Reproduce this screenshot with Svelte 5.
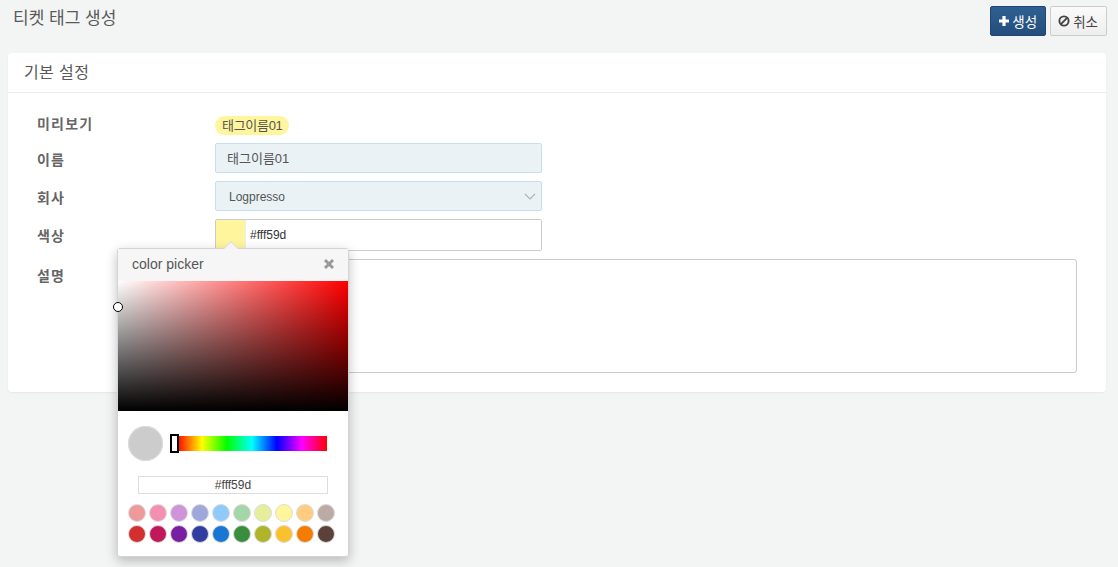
<script>
	let name = $state('태그이름01');
	let color = $state('#fff59d');

	const palette = [
		'#ef9a9a', '#f48fb1', '#ce93d8', '#9fa8da', '#90caf9', '#a5d6a7', '#e6ee9c', '#fff59d', '#ffcc80', '#bcaaa4',
		'#d32f2f', '#c2185b', '#7b1fa2', '#303f9f', '#1976d2', '#388e3c', '#afb42b', '#fbc02d', '#f57c00', '#5d4037'
	];
</script>

<main>
	<header class="top">
		<h2>티켓 태그 생성</h2>
		<div class="actions">
			<button class="btn primary">
				<svg width="12" height="12" viewBox="0 0 12 12"><path d="M4.4 1h3.2v3.4H11v3.2H7.6V11H4.4V7.6H1V4.4h3.4z" fill="#fff" /></svg>
				생성
			</button>
			<button class="btn cancel">
				<svg width="12" height="12" viewBox="0 0 12 12" fill="none" stroke="#444" stroke-width="1.9"><circle cx="6" cy="6" r="4.6" /><path d="M2.9 9.1l6.2-6.2" /></svg>
				취소
			</button>
		</div>
	</header>

	<section class="panel">
		<div class="panel-head">기본 설정</div>
		<div class="form">
			<div class="row preview">
				<span class="label">미리보기</span>
				<span class="tag" style="background: {color}">{name}</span>
			</div>
			<div class="row name">
				<span class="label">이름</span>
				<input class="field" bind:value={name} />
			</div>
			<div class="row company">
				<span class="label">회사</span>
				<div class="field select">
					<span>Logpresso</span>
					<svg width="12" height="7" viewBox="0 0 12 7" fill="none" stroke="#a9b4b8" stroke-width="1.2"><path d="M1 1l5 5 5-5" /></svg>
				</div>
			</div>
			<div class="row colour">
				<span class="label">색상</span>
				<div class="color-input">
					<span class="swatch" style="background: {color}"></span>
					<input bind:value={color} />
				</div>
			</div>
			<div class="row desc">
				<span class="label">설명</span>
				<div class="textarea"></div>
			</div>
		</div>
	</section>

	<div class="picker">
		<span class="arrow"></span>
		<div class="picker-head">
			<span>color picker</span>
			<svg width="12" height="12" viewBox="0 0 12 12" stroke="#999" stroke-width="3"><path d="M2 2l8 8M10 2l-8 8" /></svg>
		</div>
		<div class="sat">
			<span class="knob"></span>
		</div>
		<div class="picker-body">
			<div class="hue-row">
				<span class="current"></span>
				<div class="hue"><span class="hue-handle"></span></div>
			</div>
			<input class="hex" bind:value={color} />
			<div class="palette">
				{#each palette as c}
					<span class="dot" style="background: {c}"></span>
				{/each}
			</div>
		</div>
	</div>
</main>

<style>
	:global(body) {
		background: #f3f5f4;
		margin: 0;
	}
	main {
		position: relative;
		height: 567px;
		overflow: hidden;
		box-sizing: border-box;
		padding: 0 12px 0 8px;
		font-family: 'Liberation Sans', 'Noto Sans CJK KR', sans-serif;
		color: #555;
		font-size: 12px;
	}
	.top {
		display: flex;
		justify-content: space-between;
		height: 53px;
		box-sizing: border-box;
		padding: 6px 0 0 5px;
	}
	h2 {
		margin: 0;
		font-size: 17px;
		font-weight: 400;
		line-height: 26px;
		color: #595959;
	}
	.actions {
		display: flex;
		gap: 4px;
		align-items: flex-start;
		margin-right: -1px;
	}
	.btn {
		display: inline-flex;
		align-items: center;
		gap: 2px;
		height: 30px;
		padding: 0 8px 0 7px;
		border: 1px solid #ccc;
		border-radius: 2px;
		background: linear-gradient(#fafafa, #eeeeee);
		color: #444;
		font: inherit;
		font-size: 13.5px;
	}
	.cancel { gap: 3px; }
	.primary {
		background: linear-gradient(#2f5f92, #234e7c);
		border-color: #1f4670;
		color: #fff;
	}
	.panel {
		background: #fff;
		border-radius: 4px;
		height: 339px;
		box-shadow: 0 1px 2px rgba(0, 0, 0, 0.06);
	}
	.panel-head {
		height: 40px;
		box-sizing: border-box;
		padding-left: 16px;
		line-height: 39px;
		border-bottom: 1px solid #e9eceb;
		font-size: 16px;
		letter-spacing: 0.4px;
		color: #595959;
	}
	.form {
		padding: 14px 30px 0 29px;
	}
	.row {
		display: grid;
		grid-template-columns: 178px 327px;
		align-items: start;
	}
	.label {
		font-weight: 700;
		font-size: 14px;
		letter-spacing: 1.2px;
		line-height: 34px;
		color: #666;
	}
	.preview { height: 36px; }
	.name { height: 38px; }
	.company { height: 38px; }
	.colour { height: 40px; }
	.tag {
		justify-self: start;
		margin-top: 9px;
		height: 19px;
		line-height: 19px;
		padding: 0 6px 0 7px;
		border-radius: 10px;
		font-size: 13px;
		letter-spacing: -0.3px;
		color: #555;
	}
	.field {
		box-sizing: border-box;
		width: 327px;
		height: 30px;
		padding: 0 11px 1px;
		background: #eaf2f5;
		border: 1px solid #c5e0ec;
		border-radius: 2px;
		font: inherit;
		font-size: 13px;
		color: #555;
	}
	.select {
		display: flex;
		align-items: center;
		justify-content: space-between;
		padding: 1px 5px 0 13px;
		font-size: 12px;
	}
	.color-input {
		display: flex;
		box-sizing: border-box;
		width: 327px;
		height: 32px;
		border: 1px solid #ccc;
		border-radius: 2px;
		background: #fff;
	}
	.swatch {
		width: 29px;
		border-right: 1px solid #eee;
	}
	.color-input input {
		flex: 1;
		min-width: 0;
		border: 0;
		outline: 0;
		padding: 0 0 0 4px;
		font: inherit;
		color: #333;
	}
	.desc {
		grid-template-columns: 178px 862px;
	}
	.textarea {
		height: 112px;
		border: 1px solid #ccc;
		border-radius: 3px;
		background: #fff;
	}
	.picker {
		position: absolute;
		left: 117px;
		top: 248px;
		width: 232px;
		height: 309px;
		box-sizing: border-box;
		background: #fff;
		border: 1px solid #d4d4d4;
		border-radius: 3px;
		box-shadow: 0 4px 12px rgba(0, 0, 0, 0.25);
	}
	.arrow {
		position: absolute;
		left: 108px;
		top: -6px;
		width: 9px;
		height: 9px;
		background: #f5f5f5;
		border-left: 1px solid #ddd;
		border-top: 1px solid #ddd;
		transform: rotate(45deg);
	}
	.picker-head {
		position: relative;
		display: flex;
		justify-content: space-between;
		align-items: center;
		height: 32px;
		box-sizing: border-box;
		padding: 0 13px 2px 14px;
		background: #f6f6f6;
		font-size: 14px;
		color: #555;
	}
	.sat {
		position: relative;
		height: 130px;
		background:
			linear-gradient(to bottom, transparent, #000),
			linear-gradient(to right, #fff, #f00);
	}
	.knob {
		position: absolute;
		left: -5px;
		top: 21px;
		width: 8px;
		height: 8px;
		border: 1.5px solid #000;
		border-radius: 50%;
		background: #fff;
	}
	.picker-body {
		padding: 15px 10px 0;
	}
	.hue-row {
		display: flex;
		align-items: center;
		gap: 11px;
	}
	.current {
		width: 35px;
		height: 35px;
		border-radius: 50%;
		background: #ccc;
		box-shadow: 0 0 0 1px #ddd inset;
	}
	.hue {
		position: relative;
		width: 150px;
		height: 15px;
		margin-left: 3px;
		background: linear-gradient(to right, #f00, #ff0, #0f0, #0ff, #00f, #f0f, #f00);
	}
	.hue-handle {
		position: absolute;
		left: -7px;
		top: -2px;
		width: 5px;
		height: 15px;
		border: 2px solid #000;
		background: #fff;
	}
	.hex {
		display: block;
		box-sizing: border-box;
		width: 190px;
		height: 18px;
		margin: 15px 0 0 10px;
		border: 1px solid #ddd;
		text-align: center;
		font: inherit;
		color: #444;
		padding: 0;
	}
	.palette {
		display: grid;
		grid-template-columns: repeat(10, 18px);
		column-gap: 3px;
		row-gap: 3px;
		margin-top: 10px;
		width: 207px;
	}
	.dot {
		width: 18px;
		height: 18px;
		box-sizing: border-box;
		border-radius: 50%;
		border: 1px solid #ddd;
	}
</style>
